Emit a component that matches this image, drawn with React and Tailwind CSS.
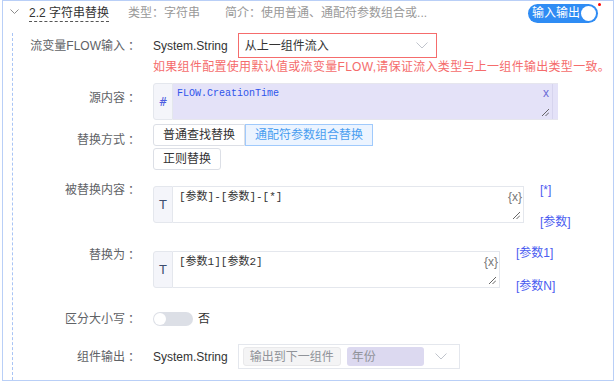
import React from "react";

const font = { fontFamily: '"Liberation Sans", "Noto Sans CJK SC", sans-serif' };

function Chevron({ className = "" }) {
  return (
    <svg className={className} width="12" height="7" viewBox="0 0 12 7" fill="none">
      <path d="M0.5 0.5 L6 6 L11.5 0.5" stroke="#c0c4cc" strokeWidth="1" />
    </svg>
  );
}

function Resize() {
  return (
    <svg width="8" height="8" viewBox="0 0 8 8" className="absolute right-[3px] bottom-[3px]">
      <path d="M1 8 L8 1 M4.5 8 L8 4.5" stroke="#555" strokeWidth="0.9" />
    </svg>
  );
}

function Label({ children, className = "" }) {
  return (
    <div className={`w-[127px] shrink-0 text-right text-[12px] text-[#606266] whitespace-nowrap ${className}`}>
      {children}
      <span className="ml-[3px]">：</span>
    </div>
  );
}

export default function App() {
  return (
    <div className="w-[616px] h-[382px] bg-white overflow-hidden" style={font}>
      <div className="ml-[2px] w-[612px] h-[381px] border border-[#b9cff7]">
        {/* header */}
        <div className="relative flex items-center h-[24px] pl-[7px]">
          <svg width="9" height="6" viewBox="0 0 9 6" fill="none" className="mt-[-2px]">
            <path d="M0.5 0.5 L4.5 4.5 L8.5 0.5" stroke="#8c8c8c" strokeWidth="1" />
          </svg>
          <div className="ml-[10px] text-[12px] text-[#333] leading-[16px] border-b border-dashed border-[#555] whitespace-nowrap">
            2.2 字符串替换
          </div>
          <div className="ml-[19px] text-[12px] text-[#999] whitespace-nowrap">类型：字符串</div>
          <div className="ml-[25px] text-[12px] text-[#999] whitespace-nowrap">简介：使用普通、通配符参数组合或...</div>
          <div className="ml-auto mr-[15px] relative flex items-center h-[19px] w-[70px] rounded-full bg-[#2f8cf4] pl-[4px] pr-[2px]">
            <span className="text-[12px] text-white leading-[19px] whitespace-nowrap">输入输出</span>
            <span className="ml-auto w-[15px] h-[15px] rounded-full bg-white"></span>
            <span className="absolute right-[-3px] top-[-1px] w-[3px] h-[3px] rounded-full bg-[#ff0000]"></span>
          </div>
        </div>

        {/* body */}
        <div className="ml-[9px] h-[352px] border-l border-dashed border-[#a9c4f5]">
          {/* row 1 */}
          <div className="flex items-center mt-[8px] h-[25px]">
            <Label>流变量FLOW输入</Label>
            <div className="ml-[13px] text-[12px] text-[#333] whitespace-nowrap">System.String</div>
            <div className="ml-[10px] flex items-center w-[199px] h-[25px] border border-[#f56c6c] pl-[6px] pr-[8px]">
              <span className="text-[12px] text-[#333]">从上一组件流入</span>
              <Chevron className="ml-auto" />
            </div>
          </div>
          <div className="ml-[140px] mt-[1px] text-[12px] leading-[16px] tracking-[0.3px] text-[#f56c6c] whitespace-nowrap">
            如果组件配置使用默认值或流变量FLOW,请保证流入类型与上一组件输出类型一致。
          </div>

          {/* row 2 源内容 */}
          <div className="flex items-start mt-[8px]">
            <Label className="pt-[7px] leading-[16px]">源内容</Label>
            <div className="ml-[13px] flex w-[405px] h-[37px]">
              <div className="w-[20px] h-full flex items-center justify-center bg-[#f4f5fa] border border-[#e4e7ed] rounded-l-[3px] text-[12px] text-[#4d5de0]" style={{ fontFamily: '"DejaVu Sans Mono", monospace' }}>
                #
              </div>
              <div className="relative flex-1 h-full bg-[#e4e2f8] border-y border-[#e6e6ee]">
                <div className="absolute right-0 top-0 bottom-0 w-[6px] bg-[#e4e2f8] border-l border-[#d6d4ee]"></div>
                <div className="pl-[4px] pt-[3px] text-[10px] leading-[14px] text-[#2f54eb]" style={{ fontFamily: '"Liberation Mono", monospace' }}>
                  FLOW.CreationTime
                </div>
                <div className="absolute right-[9px] top-[2px] text-[12px] leading-[14px] text-[#6b6bd6]">x</div>
                <div className="absolute right-[6px] bottom-0 w-[14px] h-[14px]">
                  <Resize />
                </div>
              </div>
            </div>
          </div>

          {/* row 3 替换方式 */}
          <div className="flex items-start mt-[4px]">
            <Label className="pt-[8px] leading-[16px]">替换方式</Label>
            <div className="ml-[13px]">
              <div className="flex">
                <div className="h-[22px] px-[9px] flex items-center border border-[#dcdfe6] rounded-l-[3px] text-[12px] text-[#333] bg-white">普通查找替换</div>
                <div className="h-[22px] px-[9px] flex items-center border border-[#a0cafc] bg-[#ecf4ff] text-[12px] text-[#4a9ef0]">通配符参数组合替换</div>
              </div>
              <div className="flex mt-[2px]">
                <div className="h-[22px] px-[9px] flex items-center border border-[#dcdfe6] rounded-[3px] text-[12px] text-[#333] bg-white">正则替换</div>
              </div>
            </div>
          </div>

          {/* row 4 被替换内容 */}
          <div className="flex items-start mt-[12px] h-[41px]">
            <Label className="leading-[16px]">被替换内容</Label>
            <div className="ml-[13px] mt-[4px] flex w-[371px] h-[37px]">
              <div className="w-[20px] h-full flex items-center justify-center bg-[#f4f5fa] border border-[#e4e7ed] rounded-l-[3px] text-[13px] text-[#3d4d6e]">
                T
              </div>
              <div className="relative flex-1 h-full bg-white border-y border-r border-[#e4e7ed]">
                <div className="pl-[6px] pt-[2px] text-[11px] leading-[16px] text-[#333]" style={{ fontFamily: '"Liberation Mono", "Noto Sans CJK SC", monospace' }}>
                  [参数]-[参数]-[*]
                </div>
                <div className="absolute right-[1px] top-[2px] text-[12px] leading-[16px] text-[#777]">{"{x}"}</div>
                <Resize />
              </div>
            </div>
            <div className="ml-[16px] text-[12px] leading-[16px] text-[#4a5cf0] whitespace-nowrap">
              <div>[*]</div>
              <div className="mt-[16px]">[参数]</div>
            </div>
          </div>

          {/* row 5 替换为 */}
          <div className="flex items-start mt-[24px] h-[41px]">
            <Label className="leading-[16px]">替换为</Label>
            <div className="ml-[13px] mt-[4px] flex w-[347px] h-[37px]">
              <div className="w-[20px] h-full flex items-center justify-center bg-[#f4f5fa] border border-[#e4e7ed] rounded-l-[3px] text-[13px] text-[#3d4d6e]">
                T
              </div>
              <div className="relative flex-1 h-full bg-white border-y border-r border-[#e4e7ed]">
                <div className="pl-[6px] pt-[2px] text-[11px] leading-[16px] text-[#333]" style={{ fontFamily: '"Liberation Mono", "Noto Sans CJK SC", monospace' }}>
                  [参数1][参数2]
                </div>
                <div className="absolute right-[1px] top-[2px] text-[12px] leading-[16px] text-[#777]">{"{x}"}</div>
                <Resize />
              </div>
            </div>
            <div className="ml-[16px] mt-[-2px] text-[12px] leading-[16px] text-[#4a5cf0] whitespace-nowrap">
              <div>[参数1]</div>
              <div className="mt-[17px]">[参数N]</div>
            </div>
          </div>

          {/* row 6 区分大小写 */}
          <div className="flex items-start mt-[23px]">
            <Label className="leading-[16px]">区分大小写</Label>
            <div className="ml-[13px] mt-[1px] w-[40px] h-[14px] rounded-full bg-[#dcdfe6] flex items-center pl-[1px]">
              <span className="w-[12px] h-[12px] rounded-full bg-white"></span>
            </div>
            <div className="ml-[5px] text-[12px] leading-[16px] text-[#333]">否</div>
          </div>

          {/* row 7 组件输出 */}
          <div className="flex items-center mt-[17px] h-[25px]">
            <Label>组件输出</Label>
            <div className="ml-[13px] text-[12px] text-[#333] whitespace-nowrap">System.String</div>
            <div className="ml-[10px] flex items-center w-[222px] h-[25px] border border-[#e4e7ed] pl-[4px] pr-[12px]">
              <span className="h-[19px] px-[6px] flex items-center rounded-[3px] bg-[#f4f4f5] border border-[#e9e9eb] text-[12px] text-[#909399] whitespace-nowrap">输出到下一组件</span>
              <span className="ml-[6px] h-[19px] w-[77px] px-[5px] flex items-center rounded-[3px] bg-[#dcd9f0] text-[12px] text-[#909399]">年份</span>
              <Chevron className="ml-auto" />
            </div>
          </div>
        </div>
      </div>
    </div>
  );
}
